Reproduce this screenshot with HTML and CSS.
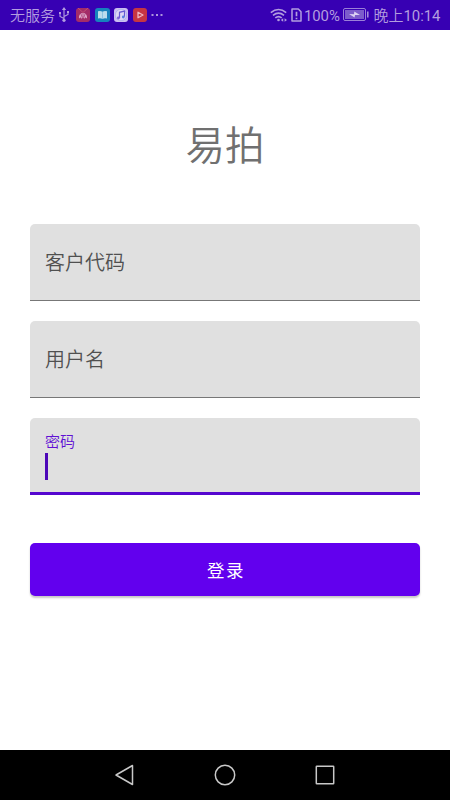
FILE: index.html
```html
<!DOCTYPE html>
<html lang="zh-CN">
<head>
<meta charset="utf-8">
<title>易拍</title>
<link rel="stylesheet" href="styles.css">
</head>
<body>
<header class="status">
  <span class="carrier">无服务</span>
  <svg class="usb" width="12" height="16" viewBox="0 0 12 16" fill="none" stroke="#b39ddf" stroke-width="1.1"><path d="M6 2v12M6 11.500 2 9.500V6M6 9.500l4-2V5"/><path d="M6 0 3.900 3h4.200zM1 5h2v2H1zM9 4h2v2H9z" fill="#b39ddf" stroke="none"/><circle cx="6" cy="13.300" r="1.600" fill="#b39ddf" stroke="none"/></svg>
  <svg class="app" width="14" height="14" viewBox="0 0 14 14"><rect width="14" height="14" rx="3" fill="#a32c68"/><path d="M2 0 7 4.500 12 0" fill="none" stroke="#c15073"/><path d="M3 10.500C2.500 6.500 5 5 7 5s4.500 1.500 4 5.500L9 9.200 8.300 11 7 8.500 5.700 11 5 9.200z" fill="#dda5c8"/><path d="M7 5v4M5 6l1 3M9 6 8 9" stroke="#a32c68" stroke-width=".6"/></svg>
  <svg class="app" width="15" height="14" viewBox="0 0 15 14"><rect width="15" height="14" rx="3" fill="#1682bd"/><path d="M3 3.300q2.500-1 4.500.5 2-1.500 4.500-.5v7.200q-2.500-.8-4.500.5-2-1.300-4.500-.5z" fill="#b9dced"/><path d="M7.500 4v7" stroke="#75b8dc" stroke-width=".7"/></svg>
  <svg class="app" width="14" height="14" viewBox="0 0 14 14"><rect width="14" height="14" rx="3" fill="#cbbdf0"/><circle cx="7" cy="7" r="5.700" fill="#ded5f5" stroke="#9ba5e8" stroke-width=".6"/><path d="M5.500 10V4.300l5-1.200v5.700" fill="none" stroke="#6858d3" stroke-width="1.200"/><circle cx="4.400" cy="10" r="1.400" fill="#8061d5"/><circle cx="9.300" cy="9" r="1.400" fill="#5a7ee0"/></svg>
  <svg class="app" width="14" height="14" viewBox="0 0 14 14"><rect width="14" height="14" rx="3" fill="#c63543"/><path d="M5 4.200 10 7l-5 2.800z" fill="none" stroke="#edb5c1" stroke-width="1.300" stroke-linejoin="round"/></svg>
  <svg class="dots" width="12" height="4" viewBox="0 0 12 4" fill="#ad96dd"><path d="M.5 1h2v2h-2zM5 1h2v2H5zM9.500 1h2v2h-2z"/></svg>
  <span class="spacer"></span>
  <svg class="wifi" width="18" height="14" viewBox="0 0 18 14" fill="none" stroke="#b39ddf" stroke-width="1.600"><path d="M.8 4.700Q8.500-1.700 16.200 4.700M3 7.300q5.500-4.500 11 0M5.300 9.900q3.200-2.600 6.400 0"/><circle cx="8.500" cy="12" r="1.300" fill="#b39ddf" stroke="none"/><path d="m10.800 12 2.400-1.700v3.400zm6.200 0-2.400-1.700v3.400z" fill="#b39ddf" stroke="none"/></svg>
  <svg class="sim" width="11" height="14" viewBox="0 0 11 14" fill="none" stroke="#b39ddf" stroke-width="1.500"><path d="M1 1h6.300L10 3.700V13H1z" stroke-linejoin="round"/><path d="M5.500 3.700v4.600M5.500 9.700v1.500" stroke-width="1.700"/></svg>
  <span class="percent">100%</span>
  <svg class="battery" width="27" height="13" viewBox="0 0 27 13"><rect x=".5" y=".5" width="22" height="12" rx="1.500" fill="none" stroke="#9b80d8"/><rect x="2" y="2" width="19" height="9" fill="#7c5ccb"/><path d="m6 6 5 .2.300-2.700 5.700 3.500-5-.1-.4 2.600z" fill="#ddd3f3"/><path d="M24.800 3.500v6" stroke="#b39ddf" stroke-width="1.400"/></svg>
  <span class="clock">晚上<span class="digits">10:14</span></span>
</header>
<main class="login">
  <h1 class="title">易拍</h1>
  <div class="field"><span class="label">客户代码</span></div>
  <div class="field"><span class="label">用户名</span></div>
  <div class="field focused"><span class="label">密码</span><span class="caret"></span></div>
  <button class="submit" type="button">登录</button>
</main>
<nav class="navbar">
  <svg width="22" height="22" viewBox="0 0 22 22"><path d="M18.500 1.500v19L2 11z"/></svg>
  <svg width="22" height="22" viewBox="0 0 22 22"><circle cx="11" cy="11" r="9.700"/></svg>
  <svg width="22" height="22" viewBox="0 0 22 22"><rect x="2.300" y="2.300" width="17.400" height="17.400" rx=".5"/></svg>
</nav>
</body>
</html>
```
FILE: styles.css
```css
* { box-sizing: border-box; }
body {
  margin: 0;
  width: 450px;
  height: 800px;
  display: flex;
  flex-direction: column;
  background: #fff;
  font-family: Roboto, "Noto Sans CJK SC", sans-serif;
}
.status {
  height: 30px;
  padding: 0 9.500px 0 10px;
  display: flex;
  align-items: center;
  background: #3700b3;
  color: #b39ddf;
  font-size: 15px;
  font-weight: 350;
  line-height: 30px;
  white-space: nowrap;
}
.status svg { flex: none; }
.carrier { width: 45px; padding-top: 1px; }
.usb { margin: 0 6px 0 3px; }
.app { margin-right: 4.500px; }
.spacer { flex: 1; }
.wifi { margin-right: 3px; }
.sim { margin-right: 2px; }
.percent, .clock { padding-top: 2px; }
.percent, .digits { font-weight: 400; font-size: 14.900px; }
.battery { margin: 0 3.500px 2px 3px; }
.login {
  flex: 1;
  padding: 87px 30px 0;
  display: flex;
  flex-direction: column;
}
.title {
  margin: 0 0 47px;
  height: 60px;
  line-height: 60px;
  font-size: 39.500px;
  font-weight: 350;
  text-align: center;
  color: #707070;
}
.field {
  height: 77px;
  margin-bottom: 20px;
  padding: 2px 15px 0;
  display: flex;
  flex-direction: column;
  justify-content: center;
  background: #e0e0e0;
  border-bottom: 1.500px solid #777;
  border-radius: 5px 5px 0 0;
}
.label {
  font-size: 20px;
  line-height: 30px;
  font-weight: 350;
  color: #505050;
}
.focused {
  justify-content: flex-start;
  padding-top: 13px;
  border-bottom: 3px solid #5507cf;
}
.focused .label {
  font-size: 15px;
  line-height: 22px;
  font-weight: 350;
  color: #6010d4;
}
.caret { width: 2.500px; height: 27px; background: #4d08b8; }
.submit {
  height: 53.500px;
  margin: 27.500px 0 0;
  padding: 0 0 0 2px;
  border: 0;
  border-radius: 5px;
  background: #6200ee;
  box-shadow: 0 2px 2px rgba(0, 0, 0, .22);
  color: #fff;
  font: 400 17.500px Roboto, "Noto Sans CJK SC", sans-serif;
  letter-spacing: 1.600px;
}
.navbar {
  height: 50px;
  display: flex;
  justify-content: center;
  align-items: center;
  gap: 78px;
  background: #000;
}
.navbar svg { fill: none; stroke: #c8c8c8; stroke-width: 1.500; stroke-linejoin: round; }
```
